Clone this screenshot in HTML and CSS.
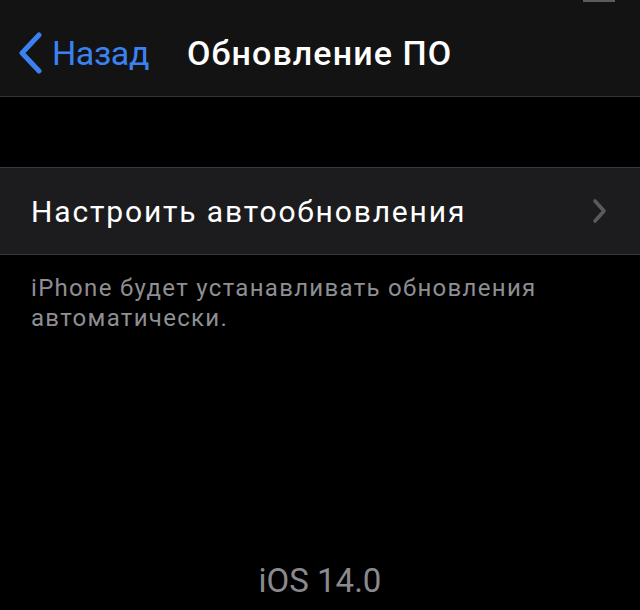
FILE: index.html
```html
<!DOCTYPE html>
<html lang="ru">
<head>
<meta charset="utf-8">
<link rel="stylesheet" href="styles.css">
</head>
<body>
<div class="screen">
  <div class="status"><span class="battery"></span></div>
  <header class="nav">
    <a class="back">
      <svg class="back-icon" width="26" height="42" viewBox="0 0 26 42"><path d="M21 3 L4 21 L21 39" fill="none" stroke="#3b82f0" stroke-width="5" stroke-linecap="round" stroke-linejoin="round"/></svg>
      <span class="back-text">Назад</span>
    </a>
    <h1 class="title">Обновление ПО</h1>
  </header>
  <div class="gap"></div>
  <div class="group">
    <div class="cell">
      <span class="cell-label">Настроить автообновления</span>
      <svg class="chev" width="16" height="26" viewBox="0 0 16 26"><path d="M3 3 L12 13 L3 23" fill="none" stroke="#5a5a5e" stroke-width="3.6" stroke-linecap="round" stroke-linejoin="round"/></svg>
    </div>
  </div>
  <p class="footer">iPhone будет устанавливать обновления автоматически.</p>
  <div class="spacer"></div>
  <div class="version">iOS 14.0</div>
</div>
</body>
</html>
```

FILE: styles.css
```css
html, body {
  margin: 0;
  padding: 0;
  background: #000;
}
body {
  font-family: Roboto, "Liberation Sans", sans-serif;
  -webkit-font-smoothing: antialiased;
}
.screen {
  width: 640px;
  height: 610px;
  display: flex;
  flex-direction: column;
  background: #000;
  position: relative;
  overflow: hidden;
}
.status {
  position: absolute;
  top: 0;
  right: 25px;
  width: 32px;
  height: 3px;
}
.battery {
  display: block;
  width: 32px;
  height: 2px;
  background: #5c5c5c;
}
.nav {
  height: 96px;
  background: #131313;
  border-bottom: 1px solid #333335;
  display: flex;
  align-items: center;
  padding-left: 18px;
  box-sizing: content-box;
}
.back {
  display: flex;
  align-items: center;
  color: #3b82f0;
  margin-top: 10px;
}
.back-icon {
  display: block;
  margin-right: 8px;
}
.back-text {
  font-size: 34px;
  line-height: 40px;
  letter-spacing: -0.4px;
}
.title {
  margin: 10px 0 0 38px;
  color: #fff;
  font-size: 34px;
  font-weight: 500;
  line-height: 40px;
  letter-spacing: 1.1px;
}
.gap {
  height: 70px;
}
.group {
  background: #1c1c1e;
  border-top: 1px solid #3a3a3c;
  border-bottom: 1px solid #3a3a3c;
}
.cell {
  height: 86px;
  display: flex;
  align-items: center;
  justify-content: space-between;
  padding: 0 32px 0 31px;
}
.cell-label {
  color: #fff;
  font-size: 30px;
  line-height: 34px;
  letter-spacing: 1.85px;
  margin-top: 2px;
}
.chev {
  display: block;
}
.footer {
  margin: 18px 0 0 31px;
  width: 570px;
  color: #8e8e93;
  font-size: 24px;
  line-height: 30px;
  letter-spacing: 1.3px;
}
.spacer {
  flex: 1;
}
.version {
  text-align: center;
  color: #8a8a8e;
  font-size: 33px;
  line-height: 40px;
  margin-bottom: 9px;
}
```
